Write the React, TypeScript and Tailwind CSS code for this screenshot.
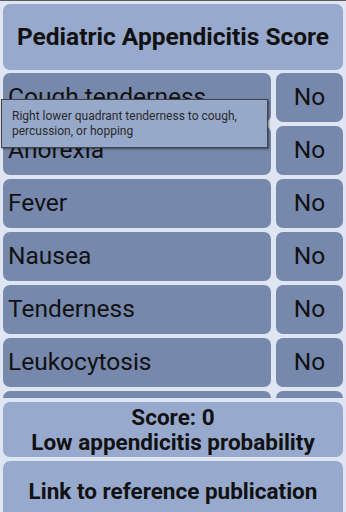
import React from "react";

const rows = ["Cough tenderness", "Anorexia", "Fever", "Nausea", "Tenderness", "Leukocytosis", "Neutrophilia"];

export default function App() {
  return (
    <div
      className="relative w-[346px] h-[512px] overflow-hidden bg-[#dfe5f2] border-t border-[#5c5c5c] flex flex-col px-[3px] pt-[3px] gap-[3px]"
      style={{ fontFamily: "Roboto, 'Liberation Sans', sans-serif" }}
    >
      <div className="h-[66px] shrink-0 rounded-[7px] bg-[#97aacd] flex items-center justify-center">
        <span className="text-[24.5px] font-bold text-[#111] whitespace-nowrap">Pediatric Appendicitis Score</span>
      </div>
      <div className="h-[325px] shrink-0 overflow-hidden flex flex-col gap-[4px]">
        {rows.map((r) => (
          <div key={r} className="h-[49px] shrink-0 flex gap-[5px]">
            <div className="w-[268px] rounded-[7px] bg-[#7689ad] flex items-center pl-[5px]">
              <span className="text-[24.5px] text-[#111] whitespace-nowrap">{r}</span>
            </div>
            <div className="flex-1 rounded-[7px] bg-[#7689ad] flex items-center justify-center">
              <span className="text-[24.5px] text-[#111]">No</span>
            </div>
          </div>
        ))}
      </div>
      <div className="h-[55px] shrink-0 mt-[1px] rounded-[7px] bg-[#97aacd] flex flex-col items-center justify-center leading-[25px]">
        <span className="text-[22.5px] font-bold text-[#111] whitespace-nowrap">Score: 0</span>
        <span className="text-[22.5px] font-bold text-[#111] whitespace-nowrap">Low appendicitis probability</span>
      </div>
      <div className="h-[58px] shrink-0 mt-[1px] rounded-[7px] bg-[#97aacd] flex items-start justify-center pt-[17px] leading-[26px]">
        <span className="text-[22.5px] font-bold text-[#111] whitespace-nowrap">Link to reference publication</span>
      </div>
      <div className="absolute left-[1px] top-[98px] w-[267px] h-[49px] bg-[#97a9cb] border border-[#444] shadow-[1px_1px_2px_rgba(0,0,0,0.5)] px-[10px] pt-[9px] text-[12px] leading-[14.5px] text-[#2a2a2a]">
        Right lower quadrant tenderness to cough, percussion, or hopping
      </div>
    </div>
  );
}
